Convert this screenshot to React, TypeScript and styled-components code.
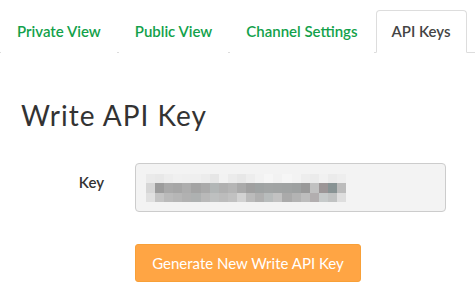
import * as React from 'react';
import styled, {createGlobalStyle} from 'styled-components';

const GlobalStyle = createGlobalStyle`
  html, body {
    margin: 0;
    padding: 0;
    background: #ffffff;
  }
  body {
    font-family: Lato, "Open Sans", "Liberation Sans", sans-serif;
    color: #333333;
  }
`;

const tabs = ['Private View', 'Public View', 'Channel Settings', 'API Keys'];

// blurred key, one grey value per block
const blur: string[][] = [
    ['eaeaea', 'e8e8e8', 'ededed', 'f0f0f0', 'efefef', 'efefef', 'ececec', 'e6e6e6', 'f2f2f2', 'ebebeb', 'e7e7e7', 'ededed', 'f2f2f2', 'f6f6f6', 'f2f2f2', 'f6f6f6', 'f3f3f3', 'ededed', 'ebebeb', 'f1f1f1', 'ebebeb', 'eeeeee'],
    ['d6d6d6', '9c9c9c', 'a9a9a9', 'a6a6a6', 'adadad', 'a4a4a4', 'aaaaaa', 'b2b6b6', 'b0b0b0', 'b5b5b5', 'aaaaaa', 'a0a0a0', '9fa3a3', 'a2a5a5', 'a1a4a4', 'a0a3a3', '9ea1a1', '999999', 'c1c1c1', '9c9697', '889394', 'bcbcbc'],
    ['e0e0e0', 'c4c4c4', 'bababa', 'b6b6b6', 'b1b1b1', 'aeb1b1', 'b9b9b9', 'bec0c0', 'bcbcbc', 'c1c1c1', 'd2d2d2', 'bbbbbb', 'b0b0b0', 'b8bcbc', 'c2c2c2', 'aaaaaa', 'b3b3b3', 'bdbdbd', 'b2aeaf', 'c6caca', 'c0c2c2', 'dedede'],
];

class App extends React.Component<{}, {}> {
    public render() {
        return (
            <Page>
                <GlobalStyle/>
                <TabBar>
                    {tabs.map((t) => (
                        <Tab key={t} active={t === 'API Keys'}>{t}</Tab>
                    ))}
                </TabBar>
                <Content>
                    <Heading>Write API Key</Heading>
                    <FormRow>
                        <Label>Key</Label>
                        <Field>
                            <KeyBox>
                                <Mosaic>
                                    {blur.map((row, r) => row.map((c, i) => (
                                        <Pixel key={r + '-' + i} style={{background: '#' + c}}/>
                                    )))}
                                </Mosaic>
                            </KeyBox>
                        </Field>
                    </FormRow>
                    <FormRow>
                        <Spacer/>
                        <Field>
                            <Button>Generate New Write API Key</Button>
                        </Field>
                    </FormRow>
                </Content>
            </Page>
        );
    }
}

const Page = styled.div`
  width: 475px;
  height: 303px;
  overflow: hidden;
`;

const TabBar = styled.div`
  display: flex;
  padding: 10px 0 0 1px;
  border-bottom: 1px solid #dddddd;
`;

const Tab = styled.div<{active?: boolean}>`
  margin-right: 2px;
  margin-bottom: -1px;
  padding: 10px 15px;
  line-height: 21px;
  font-size: 15px;
  font-weight: 600;
  color: ${p => p.active ? '#444444' : '#12a14a'};
  background: #ffffff;
  border: 1px solid ${p => p.active ? '#dddddd' : 'transparent'};
  border-bottom-color: ${p => p.active ? '#ffffff' : 'transparent'};
  border-radius: 4px 4px 0 0;
  white-space: nowrap;
`;

const Content = styled.div`
  padding: 0 29px 0 21px;
`;

const Heading = styled.h1`
  margin: 45px 0 31px;
  font-size: 28px;
  font-weight: 400;
  line-height: 34px;
  color: #333333;
  letter-spacing: 1px;
`;

const FormRow = styled.div`
  display: flex;
  align-items: flex-start;
  gap: 31px;
  margin-bottom: 32px;
`;

const Label = styled.div`
  width: 83px;
  padding-top: 9px;
  text-align: right;
  font-size: 15px;
  font-weight: 600;
  line-height: 21px;
  color: #333333;
`;

const Spacer = styled.div`
  width: 83px;
`;

const Field = styled.div`
  flex: 1;
`;

const KeyBox = styled.div`
  box-sizing: border-box;
  height: 49px;
  padding: 10px;
  background: #f3f3f3;
  border: 1px solid #cccccc;
  border-radius: 4px;
`;

const Mosaic = styled.div`
  display: grid;
  grid-template-columns: repeat(22, 9.1px);
  grid-auto-rows: 9.4px;
`;

const Pixel = styled.span`
  display: block;
`;

const Button = styled.button`
  box-sizing: border-box;
  height: 38px;
  padding: 0;
  width: 226px;
  border: 1px solid #f8a038;
  border-radius: 3px;
  background: #ffa544;
  color: #ffffff;
  font-family: Lato, "Open Sans", "Liberation Sans", sans-serif;
  font-size: 15px;
  font-weight: 400;
  white-space: nowrap;
`;

export default App;
